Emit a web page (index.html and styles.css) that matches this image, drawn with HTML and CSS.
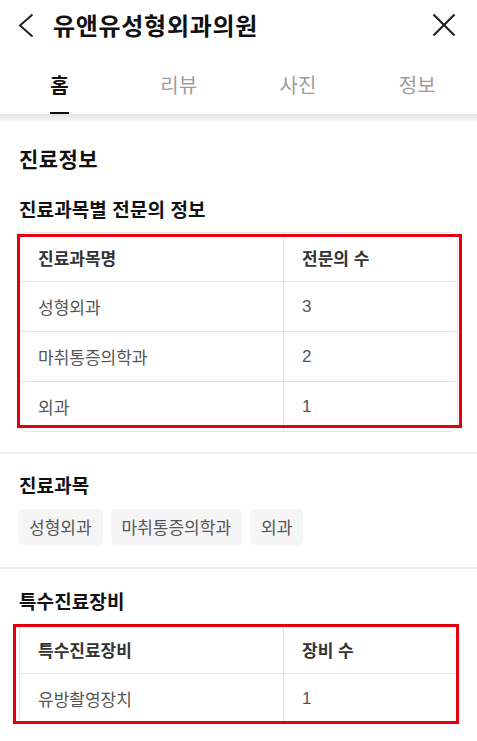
FILE: index.html
```html
<!DOCTYPE html>
<html lang="ko">
<head>
<meta charset="utf-8">
<title>유앤유성형외과의원</title>
<link rel="stylesheet" href="styles.css">
</head>
<body>
<header class="topbar">
  <svg class="back" width="16" height="26" viewBox="0 0 16 26"><polyline points="14.5,1.5 2,12.5 14.5,23.5" fill="none" stroke="#222" stroke-width="2"/></svg>
  <h1 class="title">유앤유성형외과의원</h1>
  <svg class="close" width="24" height="24" viewBox="0 0 24 24"><path d="M1.5 1.5 L22.5 22.5 M22.5 1.5 L1.5 22.5" fill="none" stroke="#222" stroke-width="2.2"/></svg>
</header>
<nav class="tabs">
  <div class="tab"><span class="label active">홈</span></div>
  <div class="tab"><span class="label">리뷰</span></div>
  <div class="tab"><span class="label">사진</span></div>
  <div class="tab"><span class="label">정보</span></div>
</nav>
<div class="band"></div>
<main class="content">
  <section class="sec first">
    <h2 class="h2">진료정보</h2>
    <h3 class="h3">진료과목별 전문의 정보</h3>
    <div class="tbl-wrap one">
      <table class="tbl">
        <thead><tr><th>진료과목명</th><th>전문의 수</th></tr></thead>
        <tbody>
          <tr><td>성형외과</td><td>3</td></tr>
          <tr><td>마취통증의학과</td><td>2</td></tr>
          <tr><td>외과</td><td>1</td></tr>
        </tbody>
      </table>
      <div class="mark"></div>
    </div>
  </section>
  <section class="sec">
    <h3 class="h3">진료과목</h3>
    <div class="chips">
      <span class="chip">성형외과</span>
      <span class="chip">마취통증의학과</span>
      <span class="chip">외과</span>
    </div>
  </section>
  <section class="sec">
    <h3 class="h3">특수진료장비</h3>
    <div class="tbl-wrap two">
      <table class="tbl">
        <thead><tr><th>특수진료장비</th><th>장비 수</th></tr></thead>
        <tbody>
          <tr><td>유방촬영장치</td><td>1</td></tr>
        </tbody>
      </table>
      <div class="mark"></div>
    </div>
  </section>
</main>
</body>
</html>
```

FILE: styles.css
```css
* { box-sizing: border-box; }
html, body { margin: 0; padding: 0; background: #fff; }
body {
  width: 477px;
  font-family: "Liberation Sans", "Noto Sans CJK KR", sans-serif;
  color: #111;
  overflow: hidden;
}
.topbar {
  height: 52px;
  display: flex;
  align-items: flex-start;
  padding: 0 0 0 18px;
}
.back { margin-top: 13px; flex: none; }
.title {
  margin: 10px 0 0 19px;
  font-family: "Noto Sans CJK KR", sans-serif;
  font-size: 24px;
  line-height: 30px;
  font-weight: 700;
  color: #111;
  flex: 1;
  letter-spacing: 0.7px;
}
.close { margin: 13px 21px 0 0; flex: none; }

.tabs {
  display: grid;
  grid-template-columns: repeat(4, 1fr);
  height: 62px;
}
.tab { display: flex; justify-content: center; padding-top: 19px; }
.label {
  font-family: "Noto Sans CJK KR", sans-serif;
  font-size: 20px;
  line-height: 28px;
  height: 43px;
  padding-bottom: 13px;
  color: #9d9d9d;
  letter-spacing: 0.3px;
}
.label.active {
  color: #111;
  font-weight: 700;
  border-bottom: 2px solid #111;
}
.band {
  height: 7px;
  background: linear-gradient(#e3e3e3, #f7f7f7);
}

.content { padding: 0 19px; }
.sec { border-top: 2px solid #eeeeee; margin: 0 -19px; padding: 0 19px; }
.sec.first { border-top: 0; padding-top: 23px; padding-bottom: 20px; }
.sec:nth-child(2) { padding-top: 18px; padding-bottom: 22px; }
.sec:nth-child(3) { padding-top: 19px; }

.h2 {
  margin: 0 0 24px;
  font-family: "Noto Sans CJK KR", sans-serif;
  font-size: 21px;
  line-height: 28px;
  font-weight: 700;
  color: #111;
  letter-spacing: 0.4px;
}
.h3 {
  margin: 0;
  font-family: "Noto Sans CJK KR", sans-serif;
  font-size: 19px;
  line-height: 26px;
  font-weight: 700;
  color: #111;
  letter-spacing: 0.1px;
}

.tbl-wrap { position: relative; margin-top: 10px; }
.tbl {
  width: 439px;
  border-collapse: separate;
  border-spacing: 0;
  border: 1px solid #e3e3e3;
  border-radius: 8px;
  overflow: hidden;
  font-size: 17px;
}
.tbl th, .tbl td {
  text-align: left;
  padding: 0 18px;
  font-weight: 400;
}
.tbl th {
  height: 48px;
  font-weight: 700;
  color: #333;
}
.tbl td {
  height: 50px;
  color: #555;
  border-top: 1px solid #e3e3e3;
}
.tbl th:first-child, .tbl td:first-child {
  width: 264px;
  border-right: 1px solid #e3e3e3;
}
.mark {
  position: absolute;
  border: 3px solid #e3000f;
  pointer-events: none;
}
.one .mark { top: 2px; left: -2px; right: -4px; bottom: 4px; }
.two .mark { top: 0; left: -6px; right: -1px; bottom: 0; }

.chips {
  display: flex;
  gap: 8px;
  margin-top: 11px;
  margin-left: -1px;
}
.chip {
  font-family: "Noto Sans CJK KR", sans-serif;
  background: #f5f5f5;
  border-radius: 5px;
  padding: 6px 11px;
  font-size: 17px;
  line-height: 24px;
  color: #555;
}
```
